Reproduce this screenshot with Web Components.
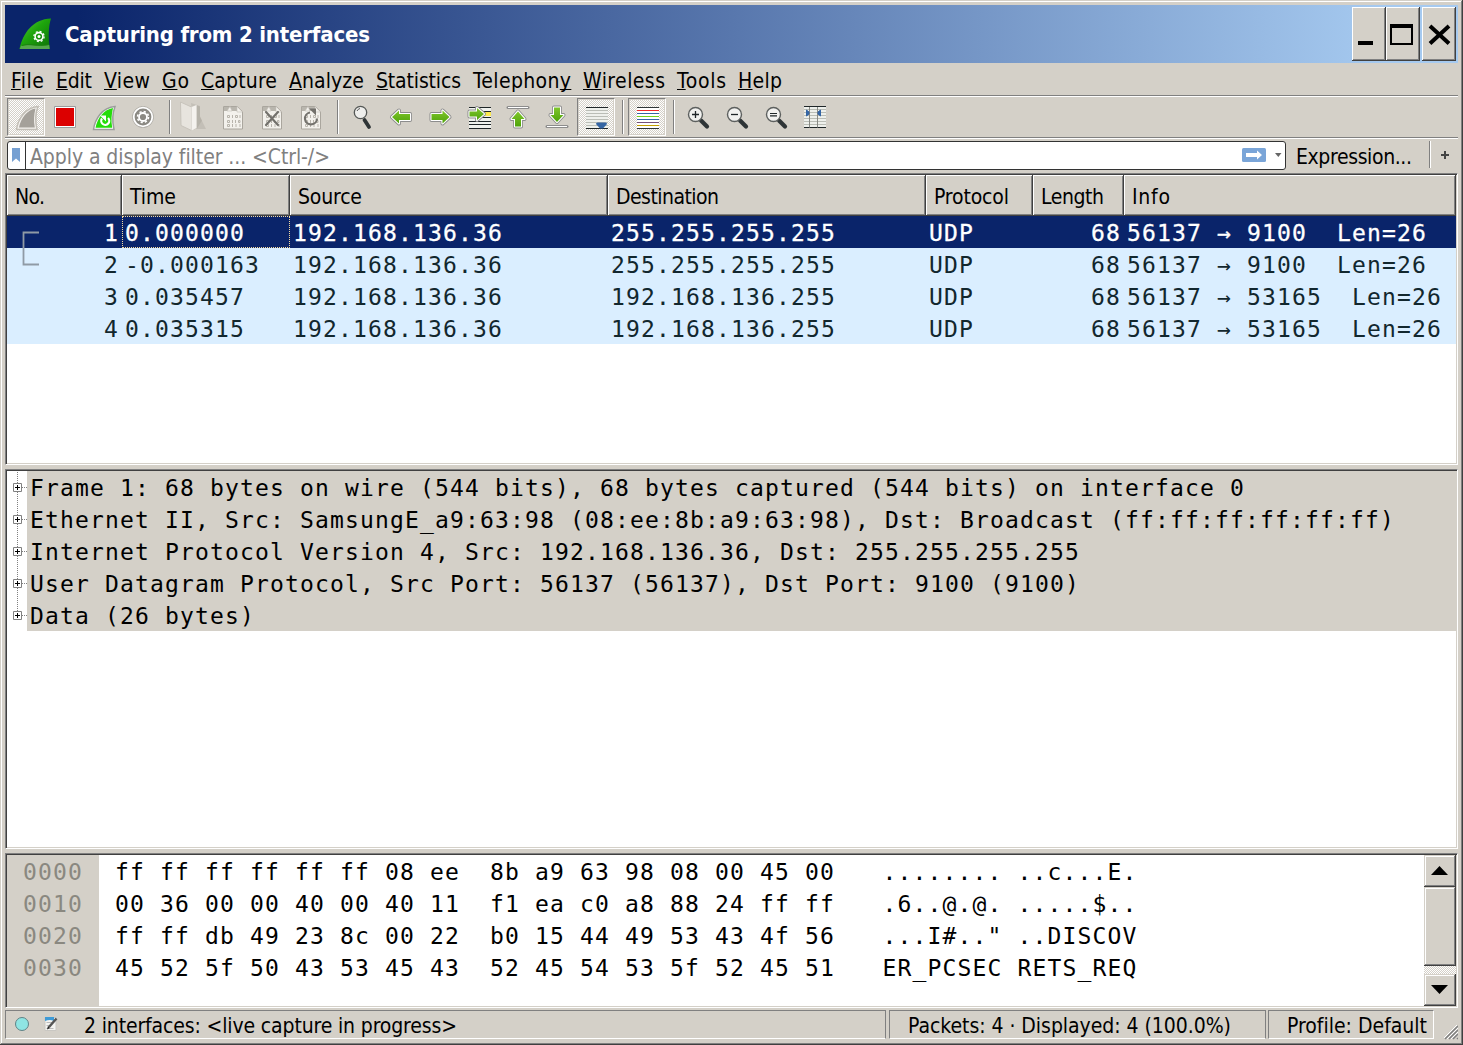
<!DOCTYPE html>
<html lang="en">
<head>
<meta charset="utf-8">
<title>Capturing from 2 interfaces</title>
<style>
	html, body { margin: 0; height: 100%; overflow: hidden; }
	body {
		--face: #d4d0c8;
		--shadow: #808080;
		--dark: #404040;
		--navy: #0a246a;
		font: 21px/26px "DejaVu Sans Condensed", "DejaVu Sans", "Noto Sans", sans-serif;
		color: #000;
	}
</style>
</head>
<body>
<capture-window>
	<title-bar>Capturing from 2 interfaces</title-bar>
	<menu-bar></menu-bar>
	<main-toolbar></main-toolbar>
	<filter-bar></filter-bar>
	<packet-list></packet-list>
	<packet-details></packet-details>
	<packet-bytes></packet-bytes>
	<status-bar></status-bar>
</capture-window>

<script>
const MONO = `font: 23px/32px "DejaVu Sans Mono", "Liberation Mono", monospace; letter-spacing: 1.153px; white-space: pre;`;
const CHECKER = `repeating-conic-gradient(#fff 0 25%, var(--face) 0 50%) 0 0 / 2px 2px`;
const SUNKEN = `
	padding: 1px;
	background: #fff;
	border: 1px solid;
	border-color: var(--shadow) #fff #fff var(--shadow);
	box-shadow: inset 1px 1px var(--dark), inset -1px -1px var(--face);
	box-sizing: border-box;`;

// base class: every element renders its template once
class BaseElement extends HTMLElement {
	connectedCallback() {
		if (this.shadowRoot) return;
		this.attachShadow({mode: 'open'});
		this.shadowRoot.innerHTML = this.template();
		this.ready();
	}

	template() { return ''; }
	ready() {}
}

// text whose tracking is adjusted to fill a given width
class FitText extends BaseElement {
	template() {
		return `<style>:host { display: inline-block; white-space: pre; flex: none; }</style><slot></slot>`;
	}

	ready() {
		const w = parseFloat(this.getAttribute('w'));
		const natural = this.getBoundingClientRect().width;
		const gaps = this.textContent.length - 1;
		this.style.letterSpacing = `${((w - natural) / gaps).toFixed(3)}px`;
		this.style.width = `${w}px`;
	}
}
customElements.define('fit-text', FitText);

class CaptureWindow extends BaseElement {
	template() {
		return `
			<style>
				:host {
					display: flex;
					flex-direction: column;
					box-sizing: border-box;
					width: 1463px;
					height: 1045px;
					padding: 5px 5px 4px 5px;
					background: var(--face);
					box-shadow: inset -1px -1px var(--dark), inset 1px 1px var(--face), inset -2px -2px var(--shadow), inset 2px 2px #fff;
				}
			</style>
			<slot></slot>
		`;
	}
}
customElements.define('capture-window', CaptureWindow);

class CaptionButton extends BaseElement {
	template() {
		return `
			<style>
				:host {
					display: block;
					box-sizing: border-box;
					width: 34px;
					height: 54px;
					background: var(--face);
					box-shadow: inset -1px -1px var(--dark), inset 1px 1px #fff, inset -2px -2px var(--shadow);
				}
				svg { display: block; }
			</style>
			<svg width="34" height="54" fill="none" stroke="#000">${this.glyph()}</svg>
		`;
	}

	glyph() {
		return {
			min: '<path d="M6 36h15" stroke-width="4"/>',
			max: '<path d="M4 19h23" stroke-width="4"/><path d="M5 19v18h21v-18" stroke-width="2"/>',
			close: '<path d="M8 19l19 17.500M27 19l-19 17.500" stroke-width="4"/>'
		}[this.getAttribute('kind')];
	}
}
customElements.define('caption-button', CaptionButton);

class TitleBar extends BaseElement {
	template() {
		return `
			<style>
				:host {
					display: flex;
					align-items: center;
					flex: none;
					height: 58px;
					background: linear-gradient(90deg, var(--navy) 5%, #a6caf0 95%);
				}
				.logo { margin: 0 14px 0 14px; }
				fit-text { color: #fff; font-weight: bold; font-size: 22px; padding-top: 1px; }
				.buttons { display: flex; margin-left: auto; padding-right: 2px; }
				caption-button:last-child { margin-left: 2px; }
			</style>
			<svg class="logo" width="32" height="32">
				<defs>
					<linearGradient id="g" x1="0" y1="0" x2="1" y2="1">
						<stop offset="0" stop-color="#5bd03c"/>
						<stop offset=".45" stop-color="#1ea50c"/>
						<stop offset="1" stop-color="#0c6e08"/>
					</linearGradient>
				</defs>
				<path d="M0.500 31C4 15 14 1 32 .500C29.500 8 29 19 31 31z" fill="url(#g)"/>
				<path d="M2 28C10 25.500 18 28.500 30.200 27l.5 4H.7z" fill="#55a84c"/>
				<path d="M3 27.500C11 25 18 29 30 26.500" fill="none" stroke="#1c8011"/>
				<g stroke="#fff" fill="none">
					<circle cx="20" cy="18.500" r="3.900" stroke-width="1.600"/>
					<circle cx="20" cy="18.500" r="5.100" stroke-width="1.300" stroke-dasharray="2 2.005"/>
				</g>
				<circle cx="20" cy="18.500" r="1.500" fill="#fff"/>
			</svg>
			<fit-text w="305">${this.textContent.trim()}</fit-text>
			<div class="buttons">
				<caption-button kind="min"></caption-button>
				<caption-button kind="max"></caption-button>
				<caption-button kind="close"></caption-button>
			</div>
		`;
	}
}
customElements.define('title-bar', TitleBar);

class MenuBar extends BaseElement {
	template() {
		const items = [['File', 33], ['Edit', 36], ['View', 46], ['Go', 27], ['Capture', 76], ['Analyze', 75],
			['Statistics', 85], ['Telephony', 98, 8], ['Wireless', 82], ['Tools', 49], ['Help', 44]];
		return `
			<style>
				:host {
					display: flex;
					flex: none;
					gap: 12px;
					height: 32px;
					box-sizing: border-box;
					padding: 5px 6px 0;
				}
				u { text-decoration: underline 1px; text-underline-offset: 1px; text-decoration-skip-ink: none; }
			</style>
			${items.map(([name, w, key = 0]) => `<fit-text w="${w}">${name.slice(0, key)}<u>${name[key]}</u>${name.slice(key + 1)}</fit-text>`).join('')}
		`;
	}
}
customElements.define('menu-bar', MenuBar);

const FIN = 'M9.500 31.500C11 21 18 9.500 31 8.500C28.500 15 28 23 30 31.500z';
const DOC = `
	<path d="M9.500 8.500h14l5 5v17.500h-19z" fill="#f3f1ec" stroke="#aaa69e"/>
	<path d="M10 9h13v4H10z" fill="#b9b6ae"/><path d="M13 13l3-4.500 2 4.500zM23 8.500v5.500h5.500z" fill="#f3f1ec" stroke="#c4c0b8" stroke-width=".6"/>
	<path d="M13.500 17.500h2v2h-2zM18.500 17v3M21.500 17.500h2v2h-2zM26 17v3M13.500 22.500h2v2h-2zM18.500 22v3M21.500 22v3M24.500 22.500h1.500v2h-1.500zM13.500 26.500h2v2h-2zM18.500 26v3M22 26v3M26 26v3" fill="none" stroke="#b8b4ac"/>`;
const LENS = `
	<path d="M22 22.500l6 6" stroke="#2e3436" stroke-width="4.200" stroke-linecap="round"/>
	<circle cx="16.500" cy="16.500" r="7" fill="#f1f1ef" stroke="#5d605f" stroke-width="1.400"/>`;

// white keyline between the grey outline and the green fill
function arrow(d) {
	return [['#8c8c8c', 4], ['#fff', 2.2], ['none', 0]]
		.map(([c, w]) => `<path d="${d}" fill="url(#a)" stroke="${c}" stroke-width="${w}" stroke-linejoin="round"/>`).join('');
}

function lines(colors, x1, x2, y, step) {
	return colors.map((c, i) => `<path d="M${x1} ${y + i * step}H${x2}" stroke="${c}"/>`).join('');
}

const ICONS = {
	start: `<path d="${FIN}" fill="#f4f2ee" stroke="#c2beb6" stroke-width="1.500"/><path d="M12 29.500C14 20 20 12 28.500 10.500C27 16 26.500 23 27.800 29.500z" fill="#a5a19a"/>`,
	stop: `<path d="M8.500 8.500h21v21h-21z" fill="#fff" stroke="#9a9c9c"/><path d="M10 10h18v18H10z" fill="#dc0000"/>`,
	restart: `<g transform="translate(-1)"><path d="${FIN}" fill="#fff" stroke="#9b9d9b" stroke-width="1.500"/><path d="M11.500 29.800C13.500 20 20 11.500 29 10C27.500 16 27 23 28.200 29.800z" fill="#24dc0a"/>
		<path d="M18 20.500a4 4 0 1 0 6-.5" fill="none" stroke="#fff" stroke-width="2.200"/><path d="M16 17.500h6v6z" fill="#fff"/></g>`,
	options: `<circle cx="19" cy="19" r="10.500" fill="#8b8983" stroke="#b3b0a9"/><circle cx="19" cy="19" r="9.300" fill="none" stroke="#fff" stroke-width="1.800"/>
		<circle cx="19" cy="19" r="4" fill="none" stroke="#fff" stroke-width="1.800"/><circle cx="19" cy="19" r="5.500" fill="none" stroke="#fff" stroke-width="1.600" stroke-dasharray="2.160 2.160"/>`,
	open: `<path d="M17 31h14l-6-12h-5z" fill="#aaa69e" opacity=".4"/><path d="M16 5l9 3v18l-6 6z" fill="#c4c0b8"/>
		<path d="M22 7.500l3 1v10l2 4-5 8z" fill="#aca89f" opacity=".55"/><path d="M5.500 4l11 5v23.500l-10.500-5z" fill="#e7e4de" stroke="#c8c4bc"/><path d="M16.500 9l5-2v23l-5 2.500z" fill="#f4f2ee"/>`,
	save: DOC,
	close: DOC + `<path d="M13 14l12 13M25 14l-12 13" stroke="#73716c" stroke-width="2.200" stroke-linecap="round"/>`,
	reload: DOC + `<path d="M18 14.500a6 6 0 1 0 7 6" fill="none" stroke="#73716c" stroke-width="2.200"/><path d="M17 10.500h7v7z" fill="#73716c"/>`,
	find: `<path d="M21.500 22l4.500 7" stroke="#2e3436" stroke-width="3.800" stroke-linecap="round"/><circle cx="17.500" cy="14.500" r="6.200" fill="#eeeeec" stroke="#555856" stroke-width="1.300"/>
		<path d="M14 13a4.500 4.500 0 0 1 3-2.500" fill="none" stroke="#555"/>`,
	back: arrow('M10 19l7-6.500v3.500h11v6h-11v3.500z'),
	forward: arrow('M28.500 19l-7-6.500v3.500h-11v6h11v3.500z'),
	goto: `<path d="M9 9h22v22H9z" fill="#f0f2ee"/><path d="M9 9.500h22M9 13.500h22M9 19.500h22M9 23.500h22M9 26.500h22M9 30.500h22" stroke="#1f2628"/><path d="M25 14h6v4h-6z" fill="#fce94f"/>` + arrow('M9.500 13.500h7.500v-3.500l7 6-7 6v-3.500H9.500z'),
	first: `<path d="M9 9.500h20" stroke="#8c8c8c" stroke-width="3" stroke-linecap="round"/><path d="M9 9.500h20" stroke="#fff"/>` + arrow('M19 13.500l6.500 7.500h-3.500v7.500h-6v-7.500h-3.500z'),
	last: `<path d="M9 28.500h20" stroke="#8c8c8c" stroke-width="3" stroke-linecap="round"/><path d="M9 28.500h20" stroke="#fff"/>` + arrow('M19 24l6.500-7h-3.500V9.500h-6v7.500h-3.500z'),
	autoscroll: `<path d="M9 9h22v22H9z" fill="#eef0ec"/>` + lines(['#1f2628', '#babdb6', '#babdb6', '#babdb6', '#babdb6', '#babdb6', '#babdb6', '#1f2628'], 9, 31, 9.5, 3)
		+ `<path d="M19 26q0-1.500 1.500-1.500h8q1.500 0 1.500 1.500L26 30.500h-3z" fill="#3465a4"/>`,
	colorize: `<path d="M9 9h22v22H9z" fill="#fff"/>` + lines(['#2e3436', '#ef2929', '#3465a4', '#73d216', '#3465a4', '#75507b', '#c4a000', '#2e3436'], 9, 31, 9.5, 3),
	zoomin: LENS + `<path d="M13 16.500h7M16.500 13v7" stroke="#1f2628" stroke-width="1.300"/>`,
	zoomout: LENS + `<path d="M13 16.500h7" stroke="#1f2628" stroke-width="1.300"/>`,
	zoomreset: LENS + `<path d="M13 15.500h7M13 17.900h7" stroke="#1f2628" stroke-width="1.200"/>`,
	resize: `<path d="M8 8h22v22H8z" fill="#eef0ec"/>` + lines(['#1f2628', '#babdb6', '#babdb6', '#babdb6', '#babdb6', '#babdb6', '#babdb6', '#1f2628'], 8, 30, 8.5, 3)
		+ `<path d="M13.500 9v20.500M21.500 9v20.500" stroke="#888a85"/><path d="M10.500 12l2.500 2v2l-2.500 2zM24.500 12l-2.500 2v2l2.500 2z" fill="#3465a4" stroke="#3465a4"/>`
};

class ToolButton extends BaseElement {
	template() {
		return `
			<style>
				:host { display: block; width: 39px; height: 38px; flex: none; }
				.frame { width: 38px; height: 38px; box-sizing: border-box; }
				:host([checked]) .frame {
					background: ${CHECKER};
					border: 1px solid;
					border-color: var(--shadow) #fff #fff var(--shadow);
					box-shadow: inset 0 0 0 1px var(--face);
				}
				svg { display: block; }
				:host([checked]) svg { margin: -1px; }
			</style>
			<div class="frame">
				<svg width="39" height="38" fill="none">
					<defs><linearGradient id="a" x1="0" y1="0" x2="0" y2="1"><stop offset="0" stop-color="#80c62c"/><stop offset="1" stop-color="#4ea30a"/></linearGradient></defs>
					${ICONS[this.getAttribute('icon')]}
				</svg>
			</div>
		`;
	}
}
customElements.define('tool-button', ToolButton);

class MainToolbar extends BaseElement {
	template() {
		const groups = [
			['start*', 'stop', 'restart', 'options'],
			['open', 'save', 'close', 'reload'],
			['find', 'back', 'forward', 'goto', 'first', 'last', 'autoscroll*'],
			['colorize*'],
			['zoomin', 'zoomout', 'zoomreset', 'resize']
		];
		const button = name => `<tool-button icon="${name.replace('*', '')}" ${name.endsWith('*') ? 'checked' : ''}></tool-button>`;
		return `
			<style>
				:host {
					display: flex;
					flex: none;
					box-sizing: border-box;
					height: 42px;
					padding: 2px 0 0 2px;
					border-top: 1px solid var(--shadow);
					box-shadow: inset 0 1px #fff;
				}
				i {
					width: 1px;
					height: 34px;
					margin: 2px 4px 0 6px;
					border-right: 1px solid #fff;
					background: var(--shadow);
				}
			</style>
			${groups.map(g => g.map(button).join('')).join('<i></i>')}
		`;
	}
}
customElements.define('main-toolbar', MainToolbar);

class FilterBar extends BaseElement {
	template() {
		return `
			<style>
				:host {
					display: flex;
					flex: none;
					box-sizing: border-box;
					height: 35px;
					border-top: 1px solid var(--shadow);
					box-shadow: inset 0 1px #fff;
					padding: 3px 0 0 2px;
				}
				.field {
					display: flex;
					align-items: center;
					box-sizing: border-box;
					width: 1279px;
					height: 29px;
					border: 1px solid #333;
					border-radius: 3px;
					background: #fff;
					color: #808080;
				}
				.mark { width: 17px; height: 27px; border-right: 1px solid #333; margin-right: 4px; }
				.apply { margin-left: auto; }
				.expr { padding: 3px 17px 0 10px; }
				.field fit-text { padding-top: 2px; }
				.plus { border-left: 1px solid var(--shadow); box-shadow: inset 1px 0 #fff; height: 27px; }
			</style>
			<div class="field">
				<svg class="mark"><path d="M4 6h8v14l-4-3.500L4 20z" fill="#76a0d2"/></svg>
				<fit-text w="300">Apply a display filter ... &lt;Ctrl-/&gt;</fit-text>
				<svg class="apply" width="43" height="27">
					<rect y="6" width="24" height="14" rx="1.500" fill="#7aa5d8"/>
					<path d="M4 11h11V8.500L20 13l-5 4.500V15H4z" fill="#fff"/>
					<path d="M33 11h6.500l-3.200 4z" fill="#666"/>
				</svg>
			</div>
			<div class="expr"><fit-text w="116">Expression...</fit-text></div>
			<svg class="plus" width="26" height="27"><path d="M11 14h8M15 10v8" stroke="#444" stroke-width="2"/></svg>
		`;
	}
}
customElements.define('filter-bar', FilterBar);

class PacketList extends BaseElement {
	template() {
		const cols = [['No.', 30], ['Time', 46], ['Source', 64], ['Destination', 103], ['Protocol', 75], ['Length', 63], ['Info', 38]];
		const rows = [
			['1', '0.000000', '192.168.136.36', '255.255.255.255', 'UDP', '68', '56137 → 9100  Len=26'],
			['2', '-0.000163', '192.168.136.36', '255.255.255.255', 'UDP', '68', '56137 → 9100  Len=26'],
			['3', '0.035457', '192.168.136.36', '192.168.136.255', 'UDP', '68', '56137 → 53165  Len=26'],
			['4', '0.035315', '192.168.136.36', '192.168.136.255', 'UDP', '68', '56137 → 53165  Len=26']
		];
		return `
			<style>
				:host {
					display: block;
					flex: none;
					position: relative;
					height: 292px;
					margin-top: 1px;
					${SUNKEN}
				}
				.row { display: grid; grid-template-columns: 115px 168px 318px 318px 107px 91px 1fr; }
				.head div {
					height: 41px;
					box-sizing: border-box;
					padding: 9px 0 0 8px;
					background: var(--face);
					box-shadow: inset -1px -1px var(--dark), inset 1px 1px #fff, inset -2px -2px var(--shadow);
				}
				.body { ${MONO} }
				.body .row { height: 32px; background: #daeeff; color: #12272e; line-height: 34px; }
				.body .row:first-child { background: var(--navy); color: #fff; -webkit-text-stroke: .3px #fff; }
				.body .row div { padding-left: 3px; box-sizing: border-box; height: 32px; }
				.body .row div:nth-child(1), .body .row div:nth-child(6) { text-align: right; padding-right: 3px; }
				.body .row:first-child div:nth-child(2) { outline: 1px dotted #f5dba0; outline-offset: -1px; }
				/* conversation bracket laid over the rows */
				.related { position: absolute; left: 16px; top: 57px; }
			</style>
			<div class="row head">${cols.map(([t, w]) => `<div><fit-text w="${w}">${t}</fit-text></div>`).join('')}</div>
			<div class="body">${rows.map(r => `<div class="row">${r.map(c => `<div>${c}</div>`).join('')}</div>`).join('')}</div>
			<svg class="related" width="17" height="36"><path d="M17 1.500H1.500v32H17" fill="none" stroke="#8f9aa5" stroke-width="1.800"/></svg>
		`;
	}
}
customElements.define('packet-list', PacketList);

class PacketDetails extends BaseElement {
	template() {
		const items = [
			'Frame 1: 68 bytes on wire (544 bits), 68 bytes captured (544 bits) on interface 0',
			'Ethernet II, Src: SamsungE_a9:63:98 (08:ee:8b:a9:63:98), Dst: Broadcast (ff:ff:ff:ff:ff:ff)',
			'Internet Protocol Version 4, Src: 192.168.136.36, Dst: 255.255.255.255',
			'User Datagram Protocol, Src Port: 56137 (56137), Dst Port: 9100 (9100)',
			'Data (26 bytes)'
		];
		return `
			<style>
				:host {
					display: block;
					flex: none;
					height: 380px;
					margin-top: 4px;
					${SUNKEN}
				}
				.item { display: flex; height: 32px; ${MONO} line-height: 34px; }
				.item div { flex: 1; background: var(--face); padding-left: 3px; }
				svg { flex: none; }
				.item:last-child .tail { display: none; }
			</style>
			${items.map(t => `
				<div class="item"><svg width="20" height="32" fill="none">
					<path d="M10.500 1v11" stroke="#808080" stroke-dasharray="1 1"/>
					<path class="tail" d="M10.500 21v11" stroke="#808080" stroke-dasharray="1 1"/>
					<path d="M15 16.500h5" stroke="#808080" stroke-dasharray="1 1"/>
					<path d="M6.500 12.500h8v8h-8z" fill="#fff" stroke="#808080"/>
					<path d="M8 16.500h5M10.500 14v5" stroke="#000"/>
				</svg><div>${t}</div></div>`.trim()).join('')}
		`;
	}
}
customElements.define('packet-details', PacketDetails);

class PacketBytes extends BaseElement {
	template() {
		const dump = [
			['0000', 'ff ff ff ff ff ff 08 ee  8b a9 63 98 08 00 45 00', '........ ..c...E.'],
			['0010', '00 36 00 00 40 00 40 11  f1 ea c0 a8 88 24 ff ff', '.6..@.@. .....$..'],
			['0020', 'ff ff db 49 23 8c 00 22  b0 15 44 49 53 43 4f 56', '...I#.." ..DISCOV'],
			['0030', '45 52 5f 50 43 53 45 43  52 45 54 53 5f 52 45 51', 'ER_PCSEC RETS_REQ']
		];
		return `
			<style>
				:host {
					display: flex;
					flex: none;
					height: 155px;
					margin-top: 4px;
					${SUNKEN}
				}
				.col { ${MONO} padding-top: 1px; }
				.offset { width: 92px; box-sizing: border-box; padding-left: 16px; background: var(--face); color: #8a8880; }
				.hex { padding-left: 16px; }
				.ascii { padding-left: 47.5px; }
				.scroll { display: flex; flex-direction: column; width: 32px; margin-left: auto; background: ${CHECKER}; }
				.scroll > * {
					background: var(--face);
					height: 32px;
					box-shadow: inset -1px -1px var(--dark), inset 1px 1px var(--face), inset -2px -2px var(--shadow), inset 2px 2px #fff;
				}
				.scroll .thumb { height: 79px; }
				.scroll > :last-child { margin-top: auto; }
			</style>
			<div class="col offset">${dump.map(d => `<div>${d[0]}</div>`).join('')}</div>
			<div class="col hex">${dump.map(d => `<div>${d[1]}</div>`).join('')}</div>
			<div class="col ascii">${dump.map(d => `<div>${d[2]}</div>`).join('')}</div>
			<div class="scroll">
				<svg width="32"><path d="M7 20l8.500-9 8.500 9z"/></svg>
				<div class="thumb"></div>
				<svg width="32"><path d="M7 11l8.500 9 8.500-9z"/></svg>
			</div>
		`;
	}
}
customElements.define('packet-bytes', PacketBytes);

class StatusBar extends BaseElement {
	template() {
		return `
			<style>
				:host { display: flex; flex: none; height: 31px; margin-top: 2px; }
				.cell {
					display: flex;
					box-sizing: border-box;
					height: 29px;
					padding-top: 2px;
					border: 1px solid;
					border-color: var(--shadow) #fff #fff var(--shadow);
				}
				.main { width: 881px; }
				.count { width: 377px; margin-left: 3px; padding-left: 18px; }
				.profile { width: 166px; margin-left: 2px; padding-left: 18px; }
				.main, .count { border-right-color: var(--shadow); }
				.icons { margin: -2px 0 0; }
				.grip { margin: 15px 0 0 auto; }
			</style>
			<div class="cell main">
				<svg class="icons" width="78" height="27" fill="none">
					<circle cx="16" cy="13" r="6.500" fill="#8fe5e3" stroke="#5f8286"/>
					<path d="M39 6.500h11v13H39z" fill="#f4f4f1" stroke="#c9c7c2"/>
					<path d="M39 6h9v4q-4-2-9 0z" fill="#3f9bd6"/>
					<path d="M40.500 11.500h6M40.500 14.500h4M40.500 17.500h7" stroke="#bbb"/>
					<path d="M50.500 7.500L43 16" stroke="#555" stroke-width="2.500"/><path d="M42 15l-1 3.500 3-1.500z" fill="#222"/>
				</svg>
				<fit-text w="373">2 interfaces: &lt;live capture in progress&gt;</fit-text>
			</div>
			<div class="cell count"><fit-text w="323">Packets: 4 · Displayed: 4 (100.0%)</fit-text></div>
			<div class="cell profile"><fit-text w="140">Profile: Default</fit-text></div>
			<svg class="grip" width="14" height="15" stroke="#808080" stroke-width="1.500"><path d="M1 14L14 1M5 14L14 5M9 14L14 9M13 14l1-1"/><path d="M0 13L13 0M3 14L14 3M7 14l7-7" stroke="#fff" stroke-width="1"/></svg>
		`;
	}
}
customElements.define('status-bar', StatusBar);
</script>
</body>
</html>
